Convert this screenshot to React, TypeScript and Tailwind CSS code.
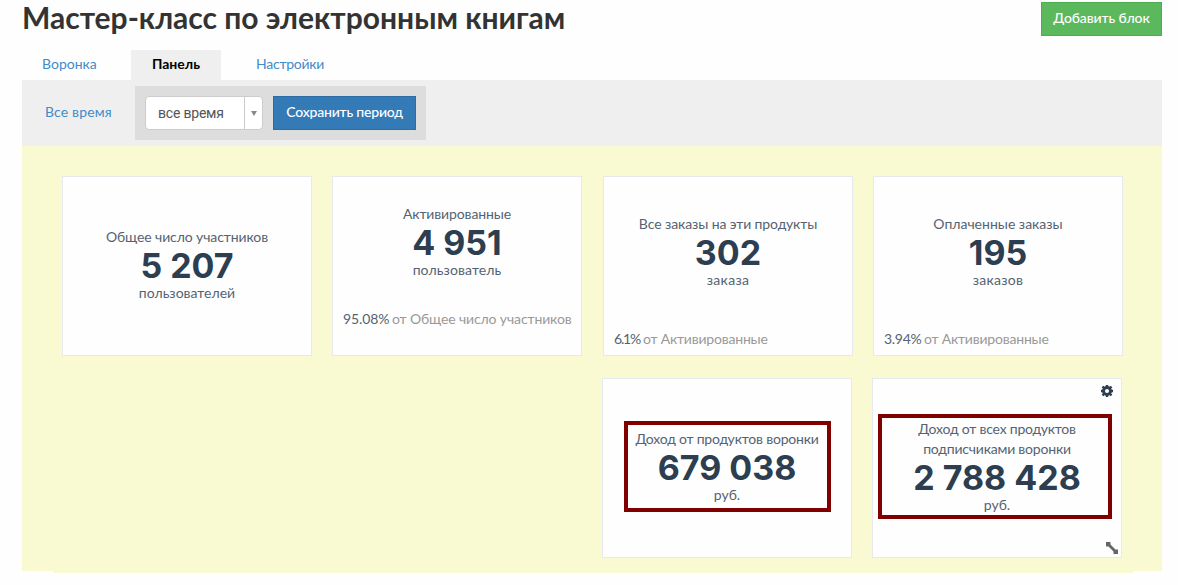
import React from 'react';

interface StatCardProps {
  label: React.ReactNode;
  value: string;
  unit: React.ReactNode;
  className: string;
  labelClass?: string;
  unitClass?: string;
  children?: React.ReactNode;
}

const StatCard: React.FC<StatCardProps> = ({ label, value, unit, className, labelClass = '', unitClass = '', children }) => {
  return (
    <div className={`relative h-[180px] w-[250px] shrink-0 border border-[#e7e9ef] bg-[#fefefe] text-sm/5 text-[#546373] ${className}`}>
      <div className="flex flex-col items-center whitespace-nowrap text-center">
        <div className={labelClass}>{label}</div>
        <div className="pt-0.5 font-[Inter,sans-serif] text-[34px]/[34px] font-bold text-[#2c3e50]">{value}</div>
        <div className={unitClass}>{unit}</div>
      </div>
      {children}
    </div>
  );
};

interface ShareProps {
  percent: string;
  of: string;
  className: string;
  percentClass: string;
}

const Share: React.FC<ShareProps> = ({ percent, of, className, percentClass }) => {
  return (
    <div className={`flex whitespace-nowrap pl-2.5 text-[#999] ${className}`}>
      <span className={`text-[#546373] ${percentClass}`}>{percent}</span>
      <span>{of}</span>
    </div>
  );
};

const GearIcon: React.FC = () => {
  return (
    <svg viewBox="0 0 12 12" className="absolute top-1.5 right-2 size-3" fill="none" stroke="#2c3e50">
      <circle cx="6" cy="6" r="3.5" strokeWidth="2.9" />
      <path d="M6 0v2M6 10v2M0 6h2M10 6h2M1.5 1.5l1.7 1.7M8.8 8.8l1.7 1.7M1.5 10.5l1.7-1.7M8.8 3.2l1.7-1.7" strokeWidth="2.4" />
    </svg>
  );
};

const ResizeIcon: React.FC = () => {
  return (
    <svg viewBox="0 0 12 12" className="absolute right-[3px] bottom-[3px] size-3" fill="#666">
      <path d="M0 0h4.5v2.5L9.5 7.5H12V12H7.5V9.5L2.5 4.5H0z" />
    </svg>
  );
};

export default function App() {
  return (
    <div className="h-[585px] w-[1178px] overflow-hidden bg-[#fefefe] pr-4 pl-[22px] font-[Lato,sans-serif] text-sm/5">
      <header className="flex h-[50px] items-start justify-between pt-0.5">
        <h1 className="whitespace-nowrap text-[30px]/[31px] font-bold text-[#333]">Мастер-класс по электронным книгам</h1>
        <button className="h-[34px] w-[121px] whitespace-nowrap border border-[#4cae4c] bg-[#5cb85c] pb-0.5 font-medium tracking-[-0.12px] text-white">
          Добавить блок
        </button>
      </header>

      <nav className="flex h-[30px] items-center whitespace-nowrap text-[#428bca]">
        <a className="w-[109px] pb-0.5 pl-5">Воронка</a>
        <a className="flex h-full w-[90px] items-center justify-center bg-[#efefef] pb-0.5 font-bold text-black">Панель</a>
        <a className="pb-0.5 pl-[35px] tracking-[-0.25px]">Настройки</a>
      </nav>

      <div className="flex h-[66px] items-center bg-[#efefef]">
        <a className="w-[113px] whitespace-nowrap pb-0.5 pl-[23px] tracking-[0.15px] text-[#428bca]">Все время</a>
        <div className="flex h-[54px] w-[291px] items-center gap-2.5 bg-[#ddd] px-2.5">
          <div className="flex h-[34px] w-[118px] items-center rounded border border-[#ccc] bg-white text-[#555]">
            <span className="flex-1 whitespace-nowrap pl-3 font-[Roboto,sans-serif] tracking-[-0.2px]">все время</span>
            <span className="flex h-full w-[18px] items-center justify-center border-l border-[#ccc]">
              <svg viewBox="0 0 6 5" className="h-[5px] w-1.5" fill="#888">
                <path d="M0 0h6L3 5z" />
              </svg>
            </span>
          </div>
          <button className="h-[34px] w-[143px] whitespace-nowrap border border-[#2e6da4] bg-[#337ab7] pb-0.5 font-medium tracking-[-0.2px] text-white">
            Сохранить период
          </button>
        </div>
      </div>

      <main className="h-[425px] bg-[#f9f9d2] pt-[30px]">
        <div className="flex pl-10">
          <StatCard
            className="mr-5 pt-[50px]"
            labelClass="tracking-[-0.1px]"
            label="Общее число участников"
            value="5 207"
            unit="пользователей"
          />
          <StatCard
            className="mr-[21px] pt-[27px]"
            labelClass="tracking-[-0.12px]"
            unitClass="tracking-[0.1px]"
            label="Активированные"
            value="4 951"
            unit="пользователь"
          >
            <Share className="mt-[29px] tracking-[-0.12px]" percentClass="w-[49px]" percent="95.08%" of="от Общее число участников" />
          </StatCard>
          <StatCard
            className="mr-5 pt-[37px]"
            labelClass="tracking-[-0.1px]"
            unitClass="tracking-[0.3px]"
            label="Все заказы на эти продукты"
            value="302"
            unit="заказа"
          >
            <Share className="mt-[39px] tracking-[-0.2px]" percentClass="w-[29px] tracking-[-1.2px]" percent="6.1%" of="от Активированные" />
          </StatCard>
          <StatCard
            className="pt-[37px]"
            unitClass="tracking-[0.3px]"
            label="Оплаченные заказы"
            value="195"
            unit="заказов"
          >
            <Share className="mt-[39px] tracking-[-0.2px]" percentClass="w-[40px] tracking-[-0.3px]" percent="3.94%" of="от Активированные" />
          </StatCard>
        </div>
        <div className="mt-[22px] flex gap-5 pl-[580px]">
          <StatCard
            className="pt-[50px]"
            labelClass="tracking-[-0.2px]"
            label="Доход от продуктов воронки"
            value="679 038"
            unit="руб."
          >
            <div className="absolute top-[42px] left-[21px] h-[91px] w-[207px] border-4 border-[#800000]" />
          </StatCard>
          <StatCard
            className="pt-10"
            labelClass="tracking-[-0.2px]"
            label={
              <>
                <div>Доход от всех продуктов</div>
                <div>подписчиками воронки</div>
              </>
            }
            value="2 788 428"
            unit="руб."
          >
            <div className="absolute top-[35px] left-[5px] h-[105px] w-[234px] border-4 border-[#800000]" />
            <GearIcon />
            <ResizeIcon />
          </StatCard>
        </div>
      </main>
      <div className="mr-[29px] ml-[31px] h-0.5 bg-[#f9f9d2]" />
    </div>
  );
}
